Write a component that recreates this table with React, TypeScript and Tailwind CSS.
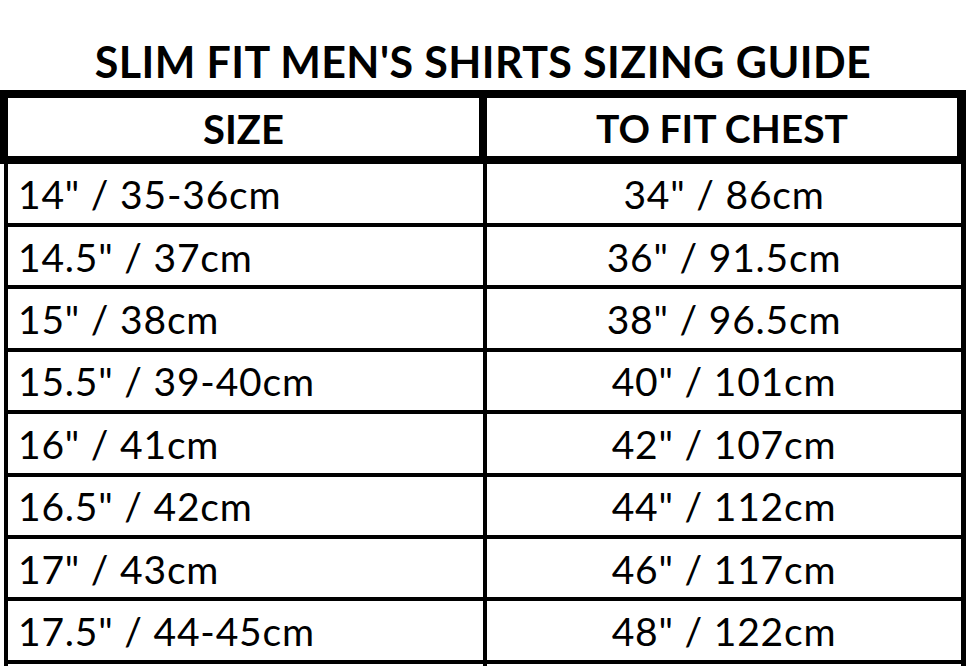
const rows: [string, string][] = [
  ['14" / 35-36cm', '34" / 86cm'],
  ['14.5" / 37cm', '36" / 91.5cm'],
  ['15" / 38cm', '38" / 96.5cm'],
  ['15.5" / 39-40cm', '40" / 101cm'],
  ['16" / 41cm', '42" / 107cm'],
  ['16.5" / 42cm', '44" / 112cm'],
  ['17" / 43cm', '46" / 117cm'],
  ['17.5" / 44-45cm', '48" / 122cm'],
  ['', ''],
]

export default function App() {
  return (
    <div className="w-[966px] bg-white text-black" style={{ fontFamily: 'Lato, "Open Sans", sans-serif' }}>
      <h1 className="h-[90px] pt-[40px] text-center text-[43px] font-bold leading-none tracking-[0.4px]">
        SLIM FIT MEN'S SHIRTS SIZING GUIDE
      </h1>

      <div className="flex h-[74px] border-t-8 border-b-8 border-l-8 border-r-[9px] border-black">
        <div className="flex w-[471px] items-center justify-center pt-[3px] text-[40px] font-bold leading-none">
          SIZE
        </div>
        <div className="w-[8px] bg-black" />
        <div className="flex flex-1 items-center justify-center pt-[3px] text-[39px] font-bold leading-none">
          TO FIT CHEST
        </div>
      </div>

      <div className="ml-[4px] border-l-4 border-r-[5px] border-black">
        {rows.map(([size, chest], i) => (
          <div
            key={i}
            className={`flex border-b-4 border-black ${i === 0 ? 'h-[63px]' : 'h-[62.4px]'}`}
          >
            <div className="flex w-[475px] items-center pl-[10px] pt-[2px] text-[39px] leading-none tracking-[0.8px]">
              {size}
            </div>
            <div className="w-[4px] bg-black" />
            <div className="flex flex-1 items-center justify-center pt-[2px] text-[39px] leading-none tracking-[0.8px]">
              {chest}
            </div>
          </div>
        ))}
      </div>
    </div>
  )
}
